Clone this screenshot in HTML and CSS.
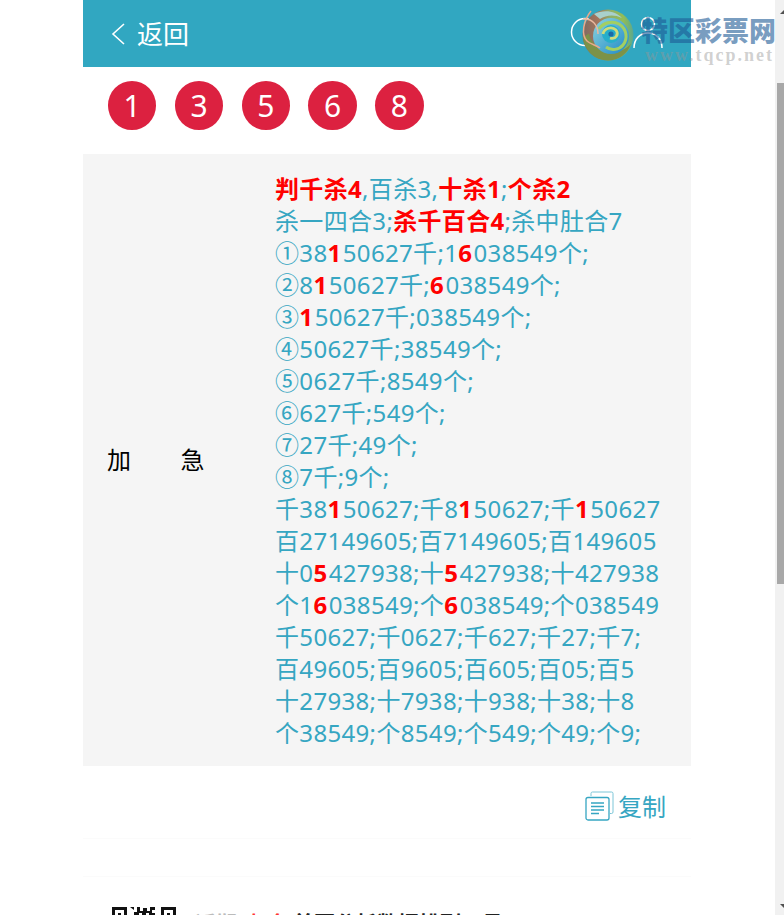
FILE: index.html
```html
<!DOCTYPE html>
<html lang="zh">
<head>
<meta charset="utf-8">
<title>返回</title>
<link rel="stylesheet" href="styles.css">
</head>
<body>
<div class="viewport">
  <div class="page">
    <main class="column">
      <header class="topbar">
        <a class="back">
          <svg class="chevron" viewBox="0 0 14 22" width="14" height="22"><path d="M13 1 2 11l11 10" fill="none" stroke="#fff" stroke-width="1.6"/></svg>
          <span>返回</span>
        </a>
      </header>
      <div class="balls">
        <span class="ball">1</span><span class="ball">3</span><span class="ball">5</span><span class="ball">6</span><span class="ball">8</span>
      </div>
      <section class="plan">
        <div class="plan-label">加急</div>
        <div class="plan-text">
          <div><b>判千杀4</b>,百杀3,<b>十杀1</b>;<b>个杀2</b></div>
          <div>杀一四合3;<b>杀千百合4</b>;杀中肚合7</div>
          <div>①38<b class="hit">1</b>50627千;1<b class="hit">6</b>038549个;</div>
          <div>②8<b class="hit">1</b>50627千;<b class="hit">6</b>038549个;</div>
          <div>③<b class="hit">1</b>50627千;038549个;</div>
          <div>④50627千;38549个;</div>
          <div>⑤0627千;8549个;</div>
          <div>⑥627千;549个;</div>
          <div>⑦27千;49个;</div>
          <div>⑧7千;9个;</div>
          <div>千38<b class="hit">1</b>50627;千8<b class="hit">1</b>50627;千<b class="hit">1</b>50627</div>
          <div>百27149605;百7149605;百149605</div>
          <div>十0<b class="hit">5</b>427938;十<b class="hit">5</b>427938;十427938</div>
          <div>个1<b class="hit">6</b>038549;个<b class="hit">6</b>038549;个038549</div>
          <div>千50627;千0627;千627;千27;千7;</div>
          <div>百49605;百9605;百605;百05;百5</div>
          <div>十27938;十7938;十938;十38;十8</div>
          <div>个38549;个8549;个549;个49;个9;</div>
        </div>
      </section>
      <div class="copy-row">
        <a class="copy">
          <svg class="copy-icon" viewBox="0 0 29 30" width="29" height="30">
            <path d="M6 5V2.500A1.500 1.500 0 0 1 7.500 1H26.500A1.500 1.500 0 0 1 28 2.500V21a1.500 1.500 0 0 1-1.500 1.500H25" fill="none" stroke="#7cc6d8" stroke-width="1"/>
            <rect x="1" y="6.500" width="23" height="22.500" rx="2" fill="#fff" stroke="#36a6c2" stroke-width="1.300"/>
            <path d="M6 12h13M6 15.500h13M6 19h13M6 22.500h8" stroke="#36a6c2" stroke-width="1.300"/>
          </svg>
          <span>复制</span>
        </a>
      </div>
      <div class="spacer-row"></div>
      <div class="promo">
        <svg class="qr" viewBox="0 0 64 9" width="64" height="9">
          <path d="M0 0h15v9H0zM3 3v6h9V3zM6 6h3v3H6zM49 0h15v9H49zM52 3v6h9V3zM55 6h3v3h-3z" fill="#111" fill-rule="evenodd"/>
          <path d="M18 0h4v3h3V0h3v4h3V1h4v3h3V0h5v3h-3v3h3v3h-6V6h-3v3h-4V6h-3v3h-5V5h3V3h-3z" fill="#111"/>
        </svg>
        <p class="promo-text"><span class="grey">近期</span><span class="red">加急</span><span class="dark">首页分析数据排列五号</span></p>
      </div>
    </main>
    <div class="watermark">
      <svg class="header-icons" viewBox="0 0 110 60" width="110" height="60">
        <defs>
          <linearGradient id="shell" x1="0" y1="0.5" x2="1" y2="0.5">
            <stop offset="0" stop-color="#7d6a62"/>
            <stop offset="0.3" stop-color="#a5745c"/>
            <stop offset="0.55" stop-color="#8fb06a"/>
            <stop offset="0.8" stop-color="#93bd55"/>
            <stop offset="1" stop-color="#5aa890"/>
          </linearGradient>
          <linearGradient id="swirl" x1="0" y1="0" x2="1" y2="1">
            <stop offset="0" stop-color="#8ed4de"/>
            <stop offset="1" stop-color="#1c88c8"/>
          </linearGradient>
        </defs>
        <circle cx="15" cy="27" r="13.500" fill="none" stroke="#fff" stroke-width="1.500"/>
        <circle cx="38" cy="30" r="25.500" fill="url(#shell)"/>
        <path d="M13 32a25 25 0 0 0 25 23.500c11 0 20-7 23-17-7 9-22 11-32 4-6-4-9-8-10-14z" fill="#7c9248"/>
        <path d="M24 9c10-5 22-3 28 4-8-4-16-3-22 1z" fill="#a9d0cc"/>
        <circle cx="41" cy="31" r="18" fill="url(#swirl)"/>
        <path d="M29 24c4-6 13-9 20-5 8 5 9 15 4 21-4 5-12 6-17 2" fill="none" stroke="#a3cf62" stroke-width="3"/>
        <circle cx="41" cy="29" r="9" fill="#27aecb"/>
        <path d="M33 29c1-6 9-8 13-4 3 4 0 10-6 8" fill="none" stroke="#cfdc7c" stroke-width="2.800"/>
        <circle cx="41" cy="29" r="2.600" fill="#1a6aa6"/>
        <path d="M21 6c-8 10-10 24-4 30 3 3 9 4 13 7" fill="none" stroke="#e8a98c" stroke-width="1.500"/>
        <path d="M13 14c10-1 15 7 15 15" fill="none" stroke="#eab9a0" stroke-width="1.500"/>
        <circle cx="78" cy="19" r="6.500" fill="none" stroke="#fff" stroke-width="1.500"/>
        <path d="M64 43c0-9 6-15 14-15s14 6 14 15" fill="none" stroke="#fff" stroke-width="1.500"/>
      </svg>
      <div class="brand">
        <div class="brand-name">特区彩票网</div>
        <div class="brand-url">www.tqcp.net</div>
      </div>
    </div>
  </div>
  <aside class="scrollbar">
    <span class="arrow up"></span>
    <span class="thumb"></span>
    <span class="arrow down"></span>
  </aside>
</div>
</body>
</html>
```

FILE: styles.css
```css
* { box-sizing: border-box; }
html, body { margin: 0; height: 100%; overflow: hidden; background: #fff; }
body { font-family: "Noto Sans", "Noto Sans CJK SC", sans-serif; color: #000; }
.viewport { display: flex; height: 915px; overflow: hidden; }
.page { position: relative; flex: 1; overflow: hidden; padding: 0 84px 0 83px; }
.column { width: 608px; }

.topbar { height: 67px; background: #31a7c1; display: flex; align-items: center; padding-left: 28px; }
.back { display: flex; align-items: center; gap: 12px; color: #fff; font-size: 26px; line-height: 34px; }
.chevron { display: block; }

.balls { display: flex; gap: 18.400px; padding: 14px 0 24px 25px; }
.ball { width: 48.400px; height: 49px; border-radius: 50%; background: #dc2140; color: #fff; font-size: 30px; line-height: 49px; text-align: center; }

.plan { display: flex; align-items: center; background: #f5f5f5; height: 612px; }
.plan-label { width: 192px; padding: 0 0 4px 24px; font-size: 24px; letter-spacing: 49.500px; white-space: nowrap; }
.plan-text { padding-top: 2px; font-size: 24px; line-height: 32px; letter-spacing: .33px; color: #36a6c2; white-space: nowrap; }
.plan-text b { color: #f00; font-weight: 700; }
.plan-text .hit { letter-spacing: 1.600px; }

.copy-row { height: 73px; display: flex; justify-content: flex-end; padding: 25px 25px 0 0; border-bottom: 1px solid #fbfbfb; }
.copy { display: flex; align-items: flex-start; gap: 4px; color: #36a6c2; font-size: 24px; line-height: 32px; height: 32px; }
.copy-icon { display: block; }
.spacer-row { height: 38px; border-bottom: 1px solid #fbfbfb; }

.promo { display: flex; align-items: flex-start; gap: 19px; padding: 30px 0 0 29px; }
.qr { display: block; flex: none; }
.promo-text { margin: 0; padding-top: 3px; font-size: 21px; line-height: 26px; font-weight: 700; white-space: nowrap; display: flex; }
.grey { color: #bbb; margin-right: 12px; }
.red { color: #f33; margin-right: 2px; }
.dark { color: #222; }

.watermark { position: absolute; top: 5px; left: 570px; display: flex; align-items: flex-start; }
.header-icons { display: block; }
.brand { margin: 10px 0 0 -39px; width: 136px; }
.brand-name { color: rgba(30, 90, 150, .6); font-size: 27px; line-height: 32px; font-weight: 900; white-space: nowrap; }
.brand-url { margin: -1px 0 0 4px; color: rgba(150, 150, 150, .45); font-family: "Liberation Serif", serif; font-size: 18px; line-height: 18px; font-weight: 700; letter-spacing: 2px; white-space: nowrap; }

.scrollbar { width: 9px; flex: none; background: #f1f1f1; display: flex; flex-direction: column; align-items: flex-end; }
.thumb { width: 7px; height: 501px; background: #a8a8a8; }
.arrow { width: 0; height: 0; border-left: 4px solid transparent; border-right: 0 solid transparent; }
.arrow.up { margin-top: 10px; margin-bottom: 69px; border-bottom: 4px solid #505050; }
.arrow.down { margin-top: 320px; border-top: 4px solid #505050; }
```
